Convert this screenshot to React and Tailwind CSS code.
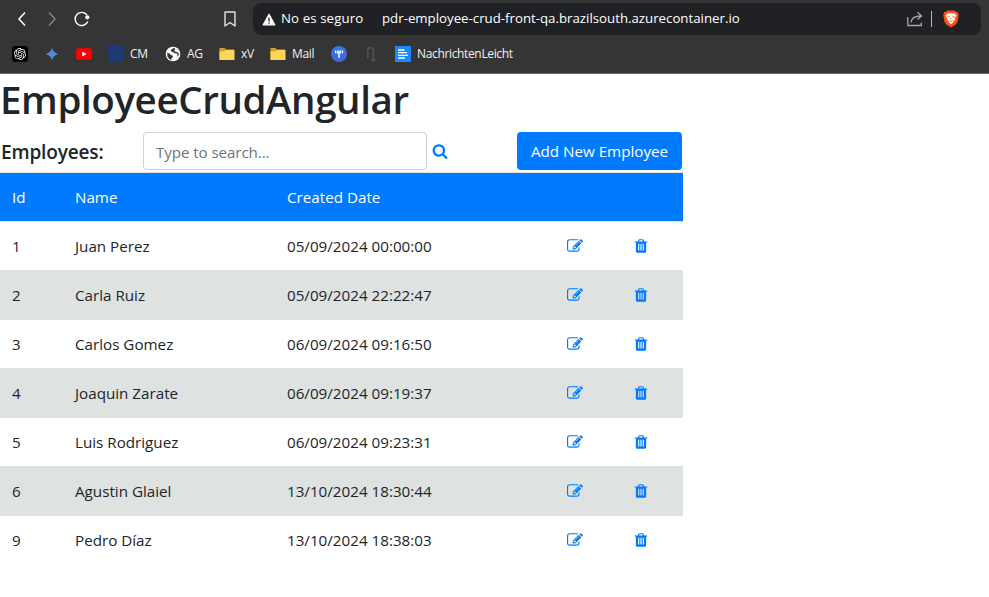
import { SiOpenai } from "react-icons/si";

const employees = [
  [1, "Juan Perez", "05/09/2024 00:00:00"],
  [2, "Carla Ruiz", "05/09/2024 22:22:47"],
  [3, "Carlos Gomez", "06/09/2024 09:16:50"],
  [4, "Joaquin Zarate", "06/09/2024 09:19:37"],
  [5, "Luis Rodriguez", "06/09/2024 09:23:31"],
  [6, "Agustin Glaiel", "13/10/2024 18:30:44"],
  [9, "Pedro Díaz", "13/10/2024 18:38:03"],
];

const EDIT =
  "M888 1184l116-116-152-152-116 116v56h96v96h56zm440-720q-16-16-33 1l-350 350q-17 17-1 33t33-1l350-350q17-17 1-33zm80 594v190q0 119-84.5 203.5t-203.5 84.5h-832q-119 0-203.5-84.5t-84.5-203.5v-832q0-119 84.5-203.5t203.5-84.5h832q63 0 117 25 15 7 18 23 3 17-9 29l-49 49q-14 14-32 8-23-6-45-6h-832q-66 0-113 47t-47 113v832q0 66 47 113t113 47h832q66 0 113-47t47-113v-126q0-13 9-22l64-64q15-15 35-7t20 29zm-96-738l288 288-672 672h-288v-288zm444 132l-92 92-288-288 92-92q28-28 68-28t68 28l152 152q28 28 28 68t-28 68z";
const TRASH =
  "M704 1376v-704q0-14-9-23t-23-9h-64q-14 0-23 9t-9 23v704q0 14 9 23t23 9h64q14 0 23-9t9-23zm256 0v-704q0-14-9-23t-23-9h-64q-14 0-23 9t-9 23v704q0 14 9 23t23 9h64q14 0 23-9t9-23zm256 0v-704q0-14-9-23t-23-9h-64q-14 0-23 9t-9 23v704q0 14 9 23t23 9h64q14 0 23-9t9-23zm-544-992h448l-48-117q-7-9-17-11h-317q-10 2-17 11zm928 32v64q0 14-9 23t-23 9h-96v948q0 83-47 143.5t-113 60.5h-832q-66 0-113-58.5t-47-141.5v-952h-96q-14 0-23-9t-9-23v-64q0-14 9-23t23-9h309l70-167q15-37 54-63t79-26h320q40 0 79 26t54 63l70 167h309q14 0 23 9t9 23z";
const SEARCH =
  "M1216 832q0-185-131.5-316.5t-316.5-131.5-316.5 131.5-131.5 316.5 131.5 316.5 316.5 131.5 316.5-131.5 131.5-316.5zm512 832q0 52-38 90t-90 38q-54 0-90-38l-343-342q-179 124-399 124-143 0-273.5-55.5t-225-150-150-225-55.5-273.5 55.5-273.5 150-225 225-150 273.5-55.5 273.5 55.5 225 150 150 225 55.5 273.5q0 220-124 399l343 343q37 37 37 90z";

function Glyph({ d, className }) {
  return (
    <svg viewBox="0 0 1792 1792" fill="currentColor" className={className}>
      <path d={d} />
    </svg>
  );
}

function Folder() {
  return (
    <svg viewBox="0 0 16 16" className="size-4">
      <path d="M0.500 2h5l1.500 1.500h8v10.500h-14.500z" fill="#d99b26" />
      <path d="M0.500 5.300h5l1.500-1.300h8.500v9.500q0 .5-.5.500h-14q-.5 0-.5-.5z" fill="#ffd557" />
    </svg>
  );
}

function Toolbar() {
  return (
    <div className="flex h-[38px] items-center">
      <svg viewBox="0 0 100 38" fill="none" className="h-[38px] w-[100px] shrink-0">
        <path d="M25 12.500l-6 6.500 6 6.500" stroke="#fff" strokeWidth="1.500" />
        <path d="M49 12.500l6 6.500-6 6.500" stroke="#8a8a8a" strokeWidth="1.300" />
        <path d="M87.800 21.500a6.600 6.600 0 1 1-.8-6.500" stroke="#fff" strokeWidth="1.400" />
        <circle cx="87.300" cy="17.300" r="2.100" fill="#fff" />
      </svg>
      <svg viewBox="0 0 16 18" fill="none" className="ml-[122px] h-[18px] w-4 shrink-0">
        <path d="M3 2.500q0-.5.500-.5h9q.5 0 .5.500v13.500l-5-3.500-5 3.500z" stroke="#e4e4e4" strokeWidth="1.400" strokeLinejoin="round" />
      </svg>
      <div className="ml-[15px] flex h-8 w-[728px] shrink-0 items-center rounded-[8px] bg-[#202124] text-[13.25px] text-white">
        <svg viewBox="0 0 14 13" className="ml-[9px] h-[13px] w-[14px]">
          <path d="M7 1.200l5.800 10.600H1.200z" fill="#fff" stroke="#fff" strokeWidth="1.200" strokeLinejoin="round" />
          <path d="M7 4.500v4M7 9.500v1.300" stroke="#202124" strokeWidth="1.300" />
        </svg>
        <span className="ml-[5px] w-[101px] tracking-[0.1px] whitespace-nowrap">No es seguro</span>
        <span className="w-[525px] whitespace-nowrap">pdr-employee-crud-front-qa.brazilsouth.azurecontainer.io</span>
        <svg viewBox="0 0 16 16" fill="none" stroke="#a6a7a9" strokeWidth="1.300" className="size-4">
          <path d="M.8 6v8.500h13.500v-3" />
          <path d="M4 11.500c.3-4.500 3-6.500 10-6.500M10.500 1.300l4 3.700-4 3.500" />
        </svg>
        <div className="ml-2 h-4 w-px bg-[#b5b5b5]" />
        <svg viewBox="0 0 16 18" className="ml-[11px] h-[18px] w-4">
          <path d="M4.500.5h7l1.500 1.300 1.700.2 1 3-1 6.500-2 3L8 17.500l-4.700-3-2-3-1-6.500 1-3 1.700-.2z" fill="#fb4f14" />
          <path d="M4.500 3.200l1.700.3 1.800-.4 1.800.4 1.700-.3 2 2.600-1.700 2.400.3 1.500-1.700 1.500-.4 1.300L8 14.300l-2-1.800-.4-1.300-1.700-1.500.3-1.500-1.700-2.400z" fill="#fff" />
          <path d="M4.300 6.500l2.500.7M11.700 6.500l-2.500.7M8 8v1.500M6.300 10.500l1.700.9 1.700-.9" stroke="#fb4f14" strokeWidth=".8" fill="none" />
        </svg>
      </div>
    </div>
  );
}

function Bookmarks() {
  return (
    <div className="flex h-8 items-center pl-3 text-[12px] tracking-[-0.3px] whitespace-nowrap text-[#f1f1f1]">
      <div className="flex size-4 shrink-0 items-center justify-center rounded-[3px] bg-black">
        <SiOpenai className="size-3 text-white" />
      </div>
      <svg viewBox="0 0 16 16" className="ml-4 size-4">
        <defs>
          <linearGradient id="spark" x1="0" y1="0" x2="1" y2="0">
            <stop offset="0" stopColor="#9a73c8" />
            <stop offset=".5" stopColor="#4a8ce0" />
            <stop offset="1" stopColor="#38a0dc" />
          </linearGradient>
        </defs>
        <path d="M8 1.200C9 5.300 10.700 7 14.800 8 10.700 9 9 10.700 8 14.800 7 10.700 5.300 9 1.200 8 5.300 7 7 5.300 8 1.200z" fill="url(#spark)" />
      </svg>
      <svg viewBox="0 0 16 16" className="ml-4 size-4">
        <rect x="0" y="2.300" width="16" height="11.400" rx="3" fill="#f00" />
        <path d="M6.300 5.600v4.800L10.500 8z" fill="#fff" />
      </svg>
      <div className="ml-4 flex size-4 items-center justify-center bg-[#1a3a78] text-[7px] font-semibold tracking-normal text-[#33363f]">
        UCC
      </div>
      <span className="ml-[6px] w-[35px]">CM</span>
      <svg viewBox="0 0 16 16" className="size-4">
        <circle cx="8" cy="8" r="7.300" fill="#fff" />
        <path
          d="M2.200 6.500l2.600 1.200 1 1.300 2.200.8-.3 1.500-1.200 1-.3 1.900-2.200-1.400-1.600-2.400z"
          fill="#353535"
        />
        <path d="M8.500 2l-2.700 2 .3 1.600 2 .4 1.200 1.300h2.200l1 1.200-.4 2.400 1.400-1.500.4-2.400-1.200-.6-1.500-.6-1.500-.4-.4-1.400 1.200-1.200z" fill="#353535" />
      </svg>
      <span className="ml-[6px] w-8">AG</span>
      <Folder />
      <span className="ml-[6px] w-[29px]">xV</span>
      <Folder />
      <span className="ml-[6px] w-[39px]">Mail</span>
      <svg viewBox="0 0 16 16" className="size-4">
        <defs>
          <linearGradient id="disc" x1="0" y1="0" x2="0" y2="1">
            <stop offset="0" stopColor="#2d7fe8" />
            <stop offset="1" stopColor="#4b5ce0" />
          </linearGradient>
        </defs>
        <circle cx="8" cy="8" r="8" fill="url(#disc)" />
        <path d="M4.500 4.500v2.700M6.300 4.500v3.200M9.700 4.500v3.200M11.500 4.500v2.700" stroke="#fff" strokeWidth="1.100" />
        <path d="M8 4.500v7.500" stroke="#fff" strokeWidth="1.500" />
      </svg>
      <svg viewBox="0 0 16 16" fill="none" stroke="#505050" strokeWidth="1.800" className="ml-4 size-4">
        <path d="M4.700 12.500V4.500Q4.700 1.700 7.500 1.700T10.300 4.500V14.500M8.300 12.800l2 2 2-2" />
      </svg>
      <svg viewBox="0 0 16 16" className="ml-4 size-4">
        <path d="M0 0h16v16H0z" fill="#1a88ff" />
        <path d="M3 4h6.500M3 6.700h9M3 9.300h10M3 12h7" stroke="#fff" strokeWidth="1.300" />
      </svg>
      <span className="ml-[6px] tracking-[-0.35px]">NachrichtenLeicht</span>
    </div>
  );
}

export default function App() {
  return (
    <div className="h-[597px] w-[989px] overflow-hidden bg-white font-['Open_Sans','Noto_Sans',sans-serif] text-[15.2px] text-[#212529]">
      <header className="h-[74px] border-b border-[#6b6b6b] bg-[#353535]">
        <Toolbar />
        <Bookmarks />
      </header>
      <main className="w-[683px]">
        <h1 className="h-[58px] text-[38.5px] leading-[51px] font-semibold tracking-[-0.4px] whitespace-nowrap">
          EmployeeCrudAngular
        </h1>
        <div className="flex h-10 items-start">
          <h2 className="w-[143px] pl-px text-[19px] leading-10 font-semibold tracking-[-0.15px]">Employees:</h2>
          <input
            className="h-[38px] w-[284px] rounded border border-[#ced4da] px-3 pt-0.5 tracking-[-0.1px] placeholder:text-[#6c757d]"
            placeholder="Type to search..."
          />
          <Glyph d={SEARCH} className="mt-[11px] ml-[4.5px] size-4 text-[#007bff]" />
          <button className="ml-[69.5px] h-[38px] w-[165px] rounded bg-[#007bff] whitespace-nowrap text-white">Add New Employee</button>
        </div>
        <div className="flex h-[49px] items-center border-t border-[#dee2e6] bg-[#007bff] pl-3 text-white">
          <span className="w-[63px]">Id</span>
          <span className="w-[212px]">Name</span>
          <span>Created Date</span>
        </div>
        {employees.map(([id, name, date], i) => (
          <div
            key={id}
            className={`flex h-[49px] items-center border-t border-[#dee2e6] pl-3 ${i % 2 ? "bg-[#dee2e1]" : "bg-white"}`}
          >
            <span className="w-[63px]">{id}</span>
            <span className="w-[212px]">{name}</span>
            <span className="w-[280px]">{date}</span>
            <Glyph d={EDIT} className="size-4 text-[#007bff]" />
            <Glyph d={TRASH} className="ml-[50px] size-4 text-[#007bff]" />
          </div>
        ))}
      </main>
    </div>
  );
}
